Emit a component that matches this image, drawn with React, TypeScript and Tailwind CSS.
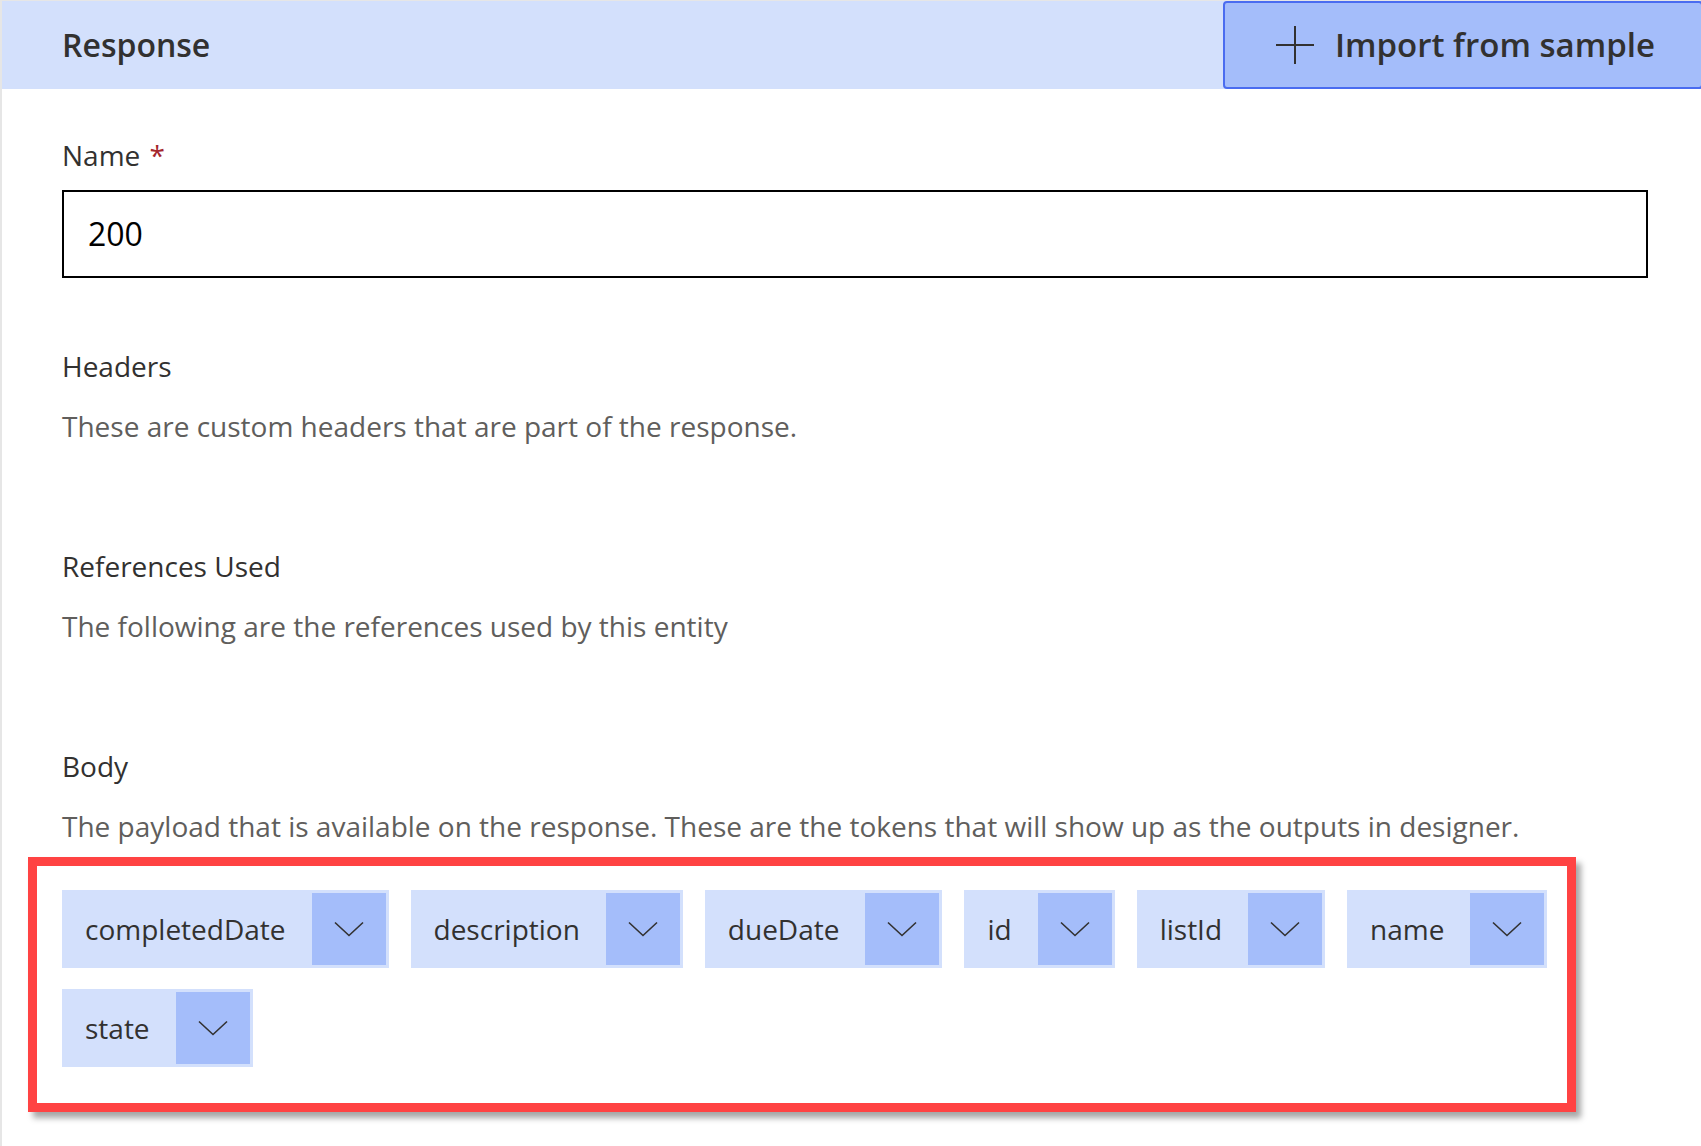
const FONT = { fontFamily: '"Segoe UI", "Open Sans", "Noto Sans", sans-serif' };

const tokens = ["completedDate", "description", "dueDate", "id", "listId", "name", "state"];

function Chevron() {
  return (
    <svg width="30" height="16" viewBox="0 0 30 16" fill="none">
      <path d="M1 1.5 L15 14.5 L29 1.5" stroke="#323130" strokeWidth="1.6" />
    </svg>
  );
}

function PlusIcon() {
  return (
    <svg width="40" height="40" viewBox="0 0 40 40" fill="none">
      <path d="M20 1 V39 M1 20 H39" stroke="#323130" strokeWidth="2" />
    </svg>
  );
}

function Section({ title, desc }: { title: string; desc: string }) {
  return (
    <div className="pl-[60px]">
      <div className="text-[28px] leading-[36px] text-[#323130] mt-[104px]">{title}</div>
      <div className="text-[28px] leading-[36px] text-[#605e5c] mt-[24px]">{desc}</div>
    </div>
  );
}

export default function App() {
  return (
    <div
      className="w-[1701px] h-[1146px] bg-white border-l-2 border-t border-[#e6e6e6] overflow-hidden"
      style={FONT}
    >
      {/* header */}
      <div className="flex h-[88px] bg-[#d3e0fc]">
        <div className="pl-[60px] flex items-center text-[32px] font-semibold text-[#323130]">
          Response
        </div>
        <button className="ml-auto w-[480px] h-[88px] -mr-[2px] flex items-center gap-[20px] pl-[50px] bg-[#a4bdfa] border-2 border-[#4a6cf0] rounded-[4px] text-[33px] font-semibold text-[#323130]">
          <PlusIcon />
          Import from sample
        </button>
      </div>

      {/* name */}
      <div className="pl-[60px] pr-[53px]">
        <div className="text-[28px] leading-[36px] text-[#323130] mt-[48px]">
          Name <span className="text-[#a4262c] ml-[2px]">*</span>
        </div>
        <div className="mt-[17px] h-[88px] border-2 border-[#000] flex items-center pl-[24px] text-[32px] text-[#000]">
          200
        </div>
      </div>

      <div className="-mt-[34px]">
        <Section title="Headers" desc="These are custom headers that are part of the response." />
        <Section title="References Used" desc="The following are the references used by this entity" />
        <Section
          title="Body"
          desc="The payload that is available on the response. These are the tokens that will show up as the outputs in designer."
        />
      </div>

      {/* tokens */}
      <div className="ml-[26px] mt-[13px] w-[1548px] border-[9px] border-[#ff4343] shadow-[5px_6px_6px_rgba(0,0,0,0.35)] pt-[24px] pl-[25px] pb-[36px] pr-[8px]">
        <div className="flex flex-wrap gap-x-[22px] gap-y-[21px]">
          {tokens.map((t) => (
            <div key={t} className="flex h-[78px] bg-[#d3e0fc] p-[3px]">
              <div className="flex items-center pl-[20px] pr-[26px] text-[28px] text-[#323130]">{t}</div>
              <div className="w-[74px] bg-[#a4bdfa] flex items-center justify-center">
                <Chevron />
              </div>
            </div>
          ))}
        </div>
      </div>
    </div>
  );
}
